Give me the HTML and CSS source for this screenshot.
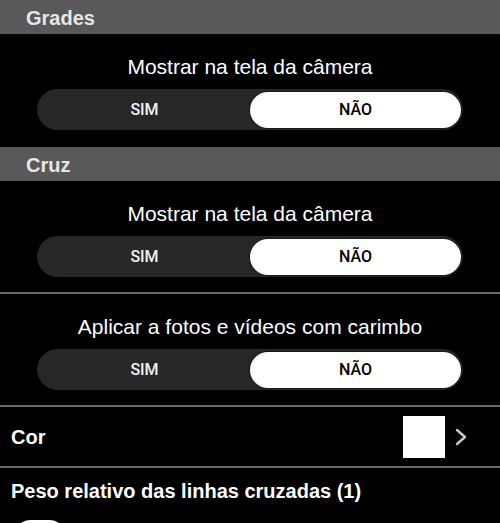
FILE: index.html
```html
<!DOCTYPE html>
<html lang="pt">
<head>
<meta charset="utf-8">
<link rel="stylesheet" href="styles.css">
</head>
<body>
<div class="screen">
  <div class="header">Grades</div>
  <div class="block block-first">
    <div class="label">Mostrar na tela da câmera</div>
    <div class="seg"><div class="opt">SIM</div><div class="opt on">NÃO</div></div>
  </div>
  <div class="header">Cruz</div>
  <div class="block sep">
    <div class="label">Mostrar na tela da câmera</div>
    <div class="seg"><div class="opt">SIM</div><div class="opt on">NÃO</div></div>
  </div>
  <div class="block sep">
    <div class="label">Aplicar a fotos e vídeos com carimbo</div>
    <div class="seg"><div class="opt">SIM</div><div class="opt on">NÃO</div></div>
  </div>
  <div class="row sep">
    <div class="row-title">Cor</div>
    <div class="row-end">
      <div class="swatch"></div>
      <svg class="chev" width="12" height="18" viewBox="0 0 12 18"><polyline points="2,2 10,9 2,16" fill="none" stroke="#c8c8c8" stroke-width="2.4" stroke-linecap="round" stroke-linejoin="round"/></svg>
    </div>
  </div>
  <div class="weight">
    <div class="row-title">Peso relativo das linhas cruzadas (1)</div>
    <div class="thumb"></div>
  </div>
</div>
</body>
</html>
```

FILE: styles.css
```css
html, body {
  margin: 0;
  padding: 0;
  background: #000;
}
body {
  width: 500px;
  height: 523px;
  overflow: hidden;
  font-family: "Liberation Sans", Arial, sans-serif;
  color: #fff;
}
.screen {
  display: flex;
  flex-direction: column;
}
.header {
  height: 34px;
  box-sizing: border-box;
  background: #595959;
  color: #e6e6e6;
  font-size: 20px;
  font-weight: bold;
  line-height: 34px;
  padding: 0 0 0 26px;
  padding-top: 1px;
}
.block {
  display: flex;
  flex-direction: column;
  gap: 10px;
  padding: 21px 37px 15px;
}
.block-first {
  padding-bottom: 17px;
}
.sep {
  border-bottom: 2px solid #6a6a6a;
}
.label {
  font-size: 21px;
  line-height: 24px;
  text-align: center;
  color: #fff;
}
.seg {
  display: flex;
  height: 41px;
  box-sizing: border-box;
  padding: 2.5px 2px 2px;
  background: #272727;
  border-radius: 21px;
}
.opt {
  flex: 1;
  display: flex;
  align-items: center;
  justify-content: center;
  font-family: Roboto, "Liberation Sans", sans-serif;
  font-weight: 500;
  font-size: 16px;
  color: #f2f2f2;
  border-radius: 18px;
}
.opt.on {
  background: #fff;
  color: #000;
  box-shadow: 0 0 1px 1px rgba(0, 0, 0, 0.35);
}
.row {
  display: flex;
  align-items: center;
  justify-content: space-between;
  height: 59px;
  padding: 0 33px 0 11px;
}
.row-title {
  font-size: 20px;
  font-weight: bold;
  line-height: 24px;
  color: #fff;
}
.row-end {
  display: flex;
  align-items: center;
  gap: 10px;
}
.swatch {
  width: 42px;
  height: 42px;
  background: #fff;
}
.chev {
  display: block;
}
.weight {
  height: 56px;
  overflow: hidden;
  padding: 11px 11px 0;
  display: flex;
  flex-direction: column;
  gap: 17px;
}
.thumb {
  flex: none;
  width: 50px;
  height: 30px;
  margin-left: 4px;
  border-radius: 15px;
  background: #fff;
}
```
